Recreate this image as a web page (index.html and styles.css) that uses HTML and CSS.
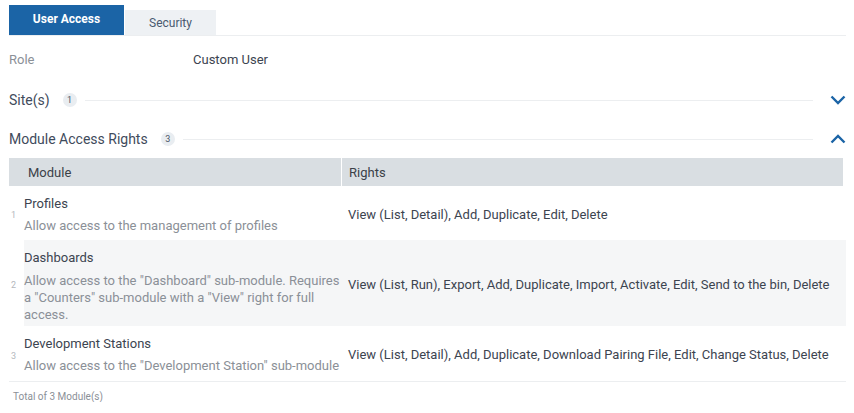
FILE: index.html
```html
<!DOCTYPE html>
<html>
<head>
<meta charset="utf-8">
<link rel="stylesheet" href="styles.css">
</head>
<body>
<div class="page">
  <div class="tabs">
    <div class="tab active">User Access</div>
    <div class="tab">Security</div>
  </div>
  <div class="field">
    <div class="label">Role</div>
    <div class="value">Custom User</div>
  </div>
  <div class="section">
    <span class="stitle">Site(s)</span><span class="badge">1</span><span class="rule"></span>
    <svg class="chev" width="16" height="10" viewBox="0 0 16 10"><path d="M1.5 1.5 L8 8 L14.5 1.5" fill="none" stroke="#1b64a6" stroke-width="2.4"/></svg>
  </div>
  <div class="section s2">
    <span class="stitle">Module Access Rights</span><span class="badge">3</span><span class="rule"></span>
    <svg class="chev" width="16" height="10" viewBox="0 0 16 10"><path d="M1.5 8.5 L8 2 L14.5 8.5" fill="none" stroke="#1b64a6" stroke-width="2.4"/></svg>
  </div>
  <div class="table">
    <div class="thead">
      <div class="th c1">Module</div>
      <div class="th c2">Rights</div>
    </div>
    <div class="row r1">
      <div class="num">1</div>
      <div class="cells">
        <div class="mod"><div class="mt">Profiles</div><div class="md">Allow access to the management of profiles</div></div>
        <div class="rights">View (List, Detail), Add, Duplicate, Edit, Delete</div>
      </div>
    </div>
    <div class="row r2 alt">
      <div class="num">2</div>
      <div class="cells">
        <div class="mod"><div class="mt">Dashboards</div><div class="md">Allow access to the "Dashboard" sub-module. Requires a "Counters" sub-module with a "View" right for full access.</div></div>
        <div class="rights">View (List, Run), Export, Add, Duplicate, Import, Activate, Edit, Send to the bin, Delete</div>
      </div>
    </div>
    <div class="row r3">
      <div class="num">3</div>
      <div class="cells">
        <div class="mod"><div class="mt">Development Stations</div><div class="md">Allow access to the "Development Station" sub-module</div></div>
        <div class="rights">View (List, Detail), Add, Duplicate, Download Pairing File, Edit, Change Status, Delete</div>
      </div>
    </div>
  </div>
  <div class="footer">Total of 3 Module(s)</div>
</div>
</body>
</html>
```
FILE: styles.css
```css
html, body { margin: 0; padding: 0; background: #fff; }
body { font-family: Roboto, "Noto Sans", Arial, sans-serif; color: #3c4450; font-size: 13px; }
.page { padding: 5px 8px 0 9px; width: 837px; }
.tabs { display: flex; align-items: flex-end; border-bottom: 1px solid #eceef0; height: 30px; }
.tab { height: 25px; line-height: 26px; text-align: center; font-size: 12px; color: #4a5a70; background: #eef1f4; width: 91px; }
.tab.active { height: 30px; line-height: 29px; width: 115px; background: #1b64a6; color: #fff; font-weight: 700; margin-right: 1px; }
.field { display: flex; margin-top: 16px; height: 16px; line-height: 16px; }
.label { width: 184px; color: #8b9097; }
.value { color: #3c4450; }
.section { display: flex; align-items: center; margin-top: 24px; height: 16px; }
.section.s2 { margin-top: 23px; }
.stitle { font-size: 14px; color: #3f4b5c; }
.badge { display: inline-block; margin-left: 13px; width: 14px; height: 14px; border-radius: 7px; background: #e9edf1; font-size: 9px; line-height: 14px; text-align: center; color: #4a5566; }
.rule { flex: 1; height: 1px; background: #eceef0; margin: 0 17px 0 8px; }
.table { margin-top: 11px; }
.thead { display: flex; background: #d9dee2; height: 28px; line-height: 29px; border-right: 3px solid #fff; }
.th { font-size: 13px; color: #3b4148; }
.th.c1 { width: 313px; padding-left: 19px; border-right: 1px solid #fff; }
.th.c2 { padding-left: 7px; }
.row { display: flex; }
.cells { flex: 1; display: flex; align-items: center; padding-top: 2px; box-sizing: border-box; }
.row.alt .cells { background: #f5f6f7; }
.r1 { height: 54px; }
.r2 { height: 86px; }
.r2 .mod { padding-top: 3px; }
.r3 { height: 55px; border-bottom: 1px solid #eceef0; }
.num { width: 15px; font-size: 9px; color: #b4b8bd; padding-left: 2px; box-sizing: border-box; display: flex; align-items: center; padding-top: 4px; }
.mod { width: 324px; }
.mt { color: #3c4450; line-height: 17px; }
.md { color: #8b9097; line-height: 17px; margin-top: 5px; }
.r2 .md { margin-top: 6px; }
.rights { color: #3c4450; }
.footer { font-size: 10px; color: #8b9097; margin-top: 9px; padding-left: 4px; }
```
